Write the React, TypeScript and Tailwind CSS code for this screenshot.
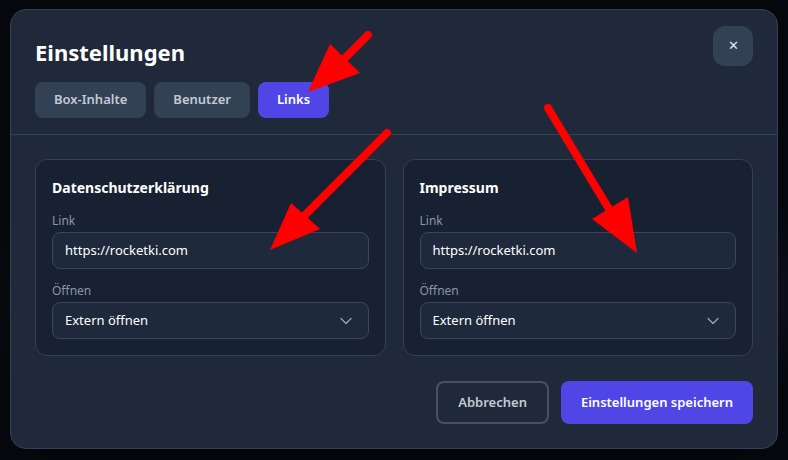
import { ChevronDown } from 'lucide-react';

const font = { fontFamily: '"Noto Sans", "Open Sans", sans-serif' };

type LinkCardProps = {
    title: string;
    url: string;
};

function LinkCard({ title, url }: LinkCardProps) {
    return (
        <div className="rounded-xl border border-[#334155] bg-[#182132] px-4 pb-4 pt-[17px]">
            <h3 className="text-sm font-bold leading-[22px] text-white">{title}</h3>

            <label className="mt-[14px] block text-xs leading-4 text-[#8b95a7]">Link</label>
            <div className="mt-[3px] flex h-[37px] items-center rounded-lg border border-[#3b4658] bg-[#1e293b] px-3 text-[13px] text-white">
                {url}
            </div>

            <label className="mt-[14px] block text-xs leading-4 text-[#8b95a7]">Öffnen</label>
            <div className="mt-[3px] flex h-[37px] items-center justify-between rounded-lg border border-[#3b4658] bg-[#1e293b] pl-3 pr-[12px] text-[13px] text-white">
                <span>Extern öffnen</span>
                <ChevronDown size={20} strokeWidth={1.5} className="text-[#9aa3b2]" />
            </div>
        </div>
    );
}

// Red annotation arrows drawn over the dialog
function Arrows() {
    return (
        <svg className="pointer-events-none absolute inset-0" width={788} height={460} viewBox="0 0 788 460">
            <g stroke="#ff0000" strokeWidth={8} strokeLinecap="round" fill="none">
                <line x1={368} y1={35} x2={335} y2={68} />
                <line x1={387} y1={133} x2={300} y2={220} />
                <line x1={548} y1={108} x2={612} y2={214} />
            </g>
            <g fill="#ff0000">
                <polygon points="308,92 330,44 360,73" />
                <polygon points="270,250 291,203 320,229" />
                <polygon points="637,253 592,219 628,197" />
            </g>
        </svg>
    );
}

export default function App() {
    const tabs = ['Box-Inhalte', 'Benutzer', 'Links'];
    const active = 'Links';

    return (
        <div className="relative h-[460px] w-[788px] overflow-hidden bg-[#06080d]" style={font}>
            {/* Soft background glows */}
            <div className="absolute right-[-30px] top-[260px] h-[70px] w-[60px] rounded-full bg-[#4c3a9a] opacity-40 blur-2xl" />
            <div className="absolute left-[-30px] top-[270px] h-[60px] w-[50px] rounded-full bg-[#1f3a2c] opacity-40 blur-2xl" />

            <div className="relative pl-[10px] pt-[9px]">
                <div className="w-[768px] rounded-2xl border border-[#344054] bg-[#1f2939] shadow-2xl">
                    {/* Header */}
                    <div className="flex items-start justify-between border-b border-[#334155] px-6 pb-4 pt-4">
                        <div>
                            <h2 className="mt-[10px] text-[22px] font-bold leading-8 text-white">Einstellungen</h2>
                            <div className="mt-[14px] flex gap-2">
                                {tabs.map((tab) => {
                                    const isActive = tab === active;
                                    return (
                                        <button
                                            key={tab}
                                            className={`h-9 rounded-lg px-[19px] text-[13px] font-semibold ${isActive
                                                ? 'bg-[#4f46e5] text-white'
                                                : 'bg-[#334155] text-[#c3cad6]'
                                                }`}
                                        >
                                            {tab}
                                        </button>
                                    );
                                })}
                            </div>
                        </div>
                        <button className="flex h-10 w-10 items-center justify-center rounded-xl bg-[#334155] text-[13px] text-[#e2e8f0]">
                            ✕
                        </button>
                    </div>

                    {/* Content */}
                    <div className="grid grid-cols-2 gap-[17px] px-6 pt-6">
                        <LinkCard title="Datenschutzerklärung" url="https://rocketki.com" />
                        <LinkCard title="Impressum" url="https://rocketki.com" />
                    </div>

                    {/* Footer */}
                    <div className="flex justify-end gap-3 px-6 pb-6 pt-[25px]">
                        <button className="h-[43px] rounded-lg border-2 border-[#465264] px-5 text-[13px] font-semibold text-[#c3cad6]">
                            Abbrechen
                        </button>
                        <button className="h-[43px] rounded-lg bg-[#4f46e5] px-5 text-[13px] font-semibold text-white">
                            Einstellungen speichern
                        </button>
                    </div>
                </div>
            </div>

            <Arrows />
        </div>
    );
}
